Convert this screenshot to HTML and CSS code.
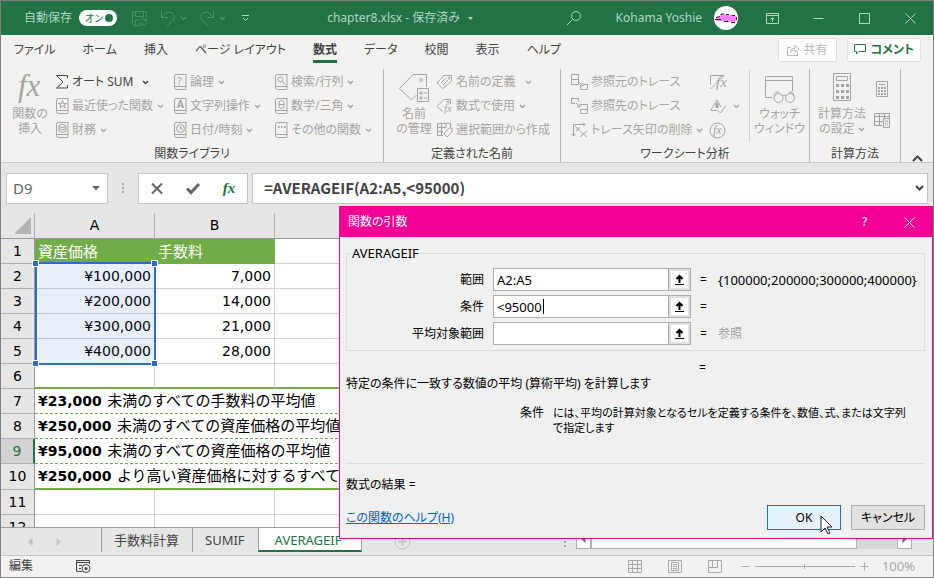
FILE: index.html
```html
<!DOCTYPE html>
<html lang="ja">
<head>
    <meta charset="UTF-8">
    <meta name="viewport" content="width=device-width, initial-scale=1.0">
    <title>chapter8.xlsx</title>
    <link rel="stylesheet" href="styles.css">
</head>
<body>
    <svg class="sprite" aria-hidden="true">
        <symbol id="chev" viewBox="0 0 7 5"><path d="M1 1l2.500 2.500L6 1"/></symbol>
        <symbol id="book" viewBox="0 0 14 18"><path d="M13.500 1.500H3.500Q1.500 1.500 1.500 3.500V14.500Q1.500 16.500 3.500 16.500H13V1.500M1.500 13.500H13" /></symbol>
        <symbol id="arrow-up" viewBox="0 0 11 12"><path d="M5.500 9V2M2.500 5l3-3 3 3"/><path d="M1 10.500h9" stroke-width="1"/></symbol>
    </svg>

    <div class="janela">
        <!-- title bar -->
        <header class="titulo">
            <div class="acesso">
                <label for="autosave">自動保存</label>
                <span class="toggle"><input type="checkbox" id="autosave" checked><span>オン</span></span>
                <button class="salvar" aria-label="保存"><svg width="17" height="17" viewBox="0 0 17 17"><path d="M7 15.500H3L1.500 14V1.500h14V7M4.500 1.500v5h8v-5M4.500 15v-5H8M9 10.500q3-4 6 0M15.500 7.500v3h-3M15.500 12.500q-3 5-6 1M8.500 16.500v-3h3"/></svg></button>
                <button class="undo" aria-label="元に戻す"><svg width="16" height="17" viewBox="0 0 16 17"><path d="M1.500 1v6.500H8M1.500 7.500L6 3q3-2 6 0 4 3 1 7l-6 6"/></svg><svg class="chev"><use href="#chev"/></svg></button>
                <button class="undo" aria-label="やり直し"><svg width="16" height="17" viewBox="0 0 16 17"><path d="M14.500 1v6.500H8M14.500 7.500L10 3Q7 1 4 3 0 6 3 10l6 6"/></svg><svg class="chev"><use href="#chev"/></svg></button>
                <button class="mais" aria-label="カスタマイズ"><svg width="9" height="8" viewBox="0 0 9 8"><path d="M1 1.500h7M2 4l2.500 2.500L7 4"/></svg></button>
            </div>
            <div class="arquivo">chapter8.xlsx - 保存済み <svg width="7" height="4" viewBox="0 0 7 4"><path class="cheio" d="M1 0h5L3.500 3z"/></svg></div>
            <button class="busca" aria-label="検索"><svg width="16" height="16" viewBox="0 0 16 16"><circle cx="10" cy="6" r="4.500"/><path d="M6.500 9.500L1 15"/></svg></button>
            <span class="usuario">Kohama Yoshie</span>
            <svg class="avatar" width="24" height="24" viewBox="0 0 24 24"><circle cx="12" cy="12" r="12" fill="#fff" stroke="none"/><path d="M2 12l5-2V8l2 1 2-1 1 1h7l3 1 1 4-2 2h-8l-3-1H2z" fill="#ff80ff" stroke="none"/><path d="M1 13.500h6M2 11.500l4-1M7 9.500V8h3M12 8.500h3M18 9.500h3M10 15.500h4M17 16.500h4M22.500 11v3" stroke="#222"/></svg>
            <div class="controles">
                <button aria-label="リボンの表示オプション"><svg width="13" height="11" viewBox="0 0 13 11"><path d="M.5.500h12v10H.500zM.5 2.500h12M6.500 9V4.500M4.500 6.500l2-2 2 2"/></svg></button>
                <button aria-label="最小化"><svg width="11" height="11" viewBox="0 0 11 11"><path d="M.5 5.500h10"/></svg></button>
                <button aria-label="最大化"><svg width="11" height="11" viewBox="0 0 11 11"><path d="M.5.500h10v10H.500z"/></svg></button>
                <button aria-label="閉じる"><svg width="11" height="11" viewBox="0 0 11 11"><path d="M.5.500l10 10M10.500.500l-10 10"/></svg></button>
            </div>
        </header>

        <!-- ribbon tabs -->
        <nav class="abas">
            <a href="#">ファイル</a>
            <a href="#">ホーム</a>
            <a href="#">挿入</a>
            <a href="#">ページ レイアウト</a>
            <a href="#" class="ativa">数式</a>
            <a href="#">データ</a>
            <a href="#">校閲</a>
            <a href="#">表示</a>
            <a href="#">ヘルプ</a>
            <div class="direita">
                <button class="caixa" disabled><svg width="13" height="12" viewBox="0 0 13 12"><path d="M4 3.500H.500v8h10V8M3 8q1-4 5-4V1l4 4-4 3.500V6Q5 6 3 8z"/></svg>共有</button>
                <button class="caixa verde"><svg width="13" height="12" viewBox="0 0 13 12"><path d="M.5.500h11v7H5L2.500 10V7.500H.500z"/></svg>コメント</button>
            </div>
        </nav>

        <!-- ribbon -->
        <section class="ribbon">
            <div class="grupo">
                <div class="itens biblioteca">
                    <button class="grande" disabled><svg width="32" height="32"><text class="fx" x="4" y="24" font-size="31">fx</text></svg><span>関数の<br>挿入</span></button>
                    <div class="coluna">
                        <button class="escuro"><svg width="14" height="18" viewBox="0 0 14 18"><path d="M12.500 5V2.500H1.500L8 9l-6.500 6h11V12"/></svg>オート SUM<svg class="chev longe"><use href="#chev"/></svg></button>
                        <button disabled><svg width="14" height="18"><use href="#book"/><path d="M7.500 3.500l1 3h3L9 8l1 3-2.500-2L5 11l1-3-2.500-1.500h3z"/></svg>最近使った関数<svg class="chev"><use href="#chev"/></svg></button>
                        <button disabled><svg width="14" height="18"><use href="#book"/><ellipse cx="7.500" cy="5" rx="3.500" ry="1.500"/><path d="M4 5v5q3.500 3 7 0V5M4 7.500q3.500 3 7 0"/></svg>財務<svg class="chev"><use href="#chev"/></svg></button>
                    </div>
                    <div class="coluna">
                        <button disabled><svg width="14" height="18"><use href="#book"/><text x="4" y="12" font-size="11">?</text></svg>論理<svg class="chev"><use href="#chev"/></svg></button>
                        <button disabled><svg width="14" height="18"><use href="#book"/><text x="4" y="11" font-size="10" font-weight="bold">A</text></svg>文字列操作<svg class="chev"><use href="#chev"/></svg></button>
                        <button disabled><svg width="14" height="18"><use href="#book"/><circle cx="7.500" cy="7.500" r="4"/><path d="M7.500 5v3H10"/></svg>日付/時刻<svg class="chev"><use href="#chev"/></svg></button>
                    </div>
                    <div class="coluna">
                        <button disabled><svg width="14" height="18"><use href="#book"/><circle cx="6.500" cy="6.500" r="2.500"/><path d="M8.500 8.500L11.500 12"/></svg>検索/行列<svg class="chev"><use href="#chev"/></svg></button>
                        <button disabled><svg width="14" height="18"><use href="#book"/><rect x="5" y="3.500" width="5" height="8" rx="2.500"/><path d="M5 7.500h5"/></svg>数学/三角<svg class="chev"><use href="#chev"/></svg></button>
                        <button disabled><svg width="14" height="18"><use href="#book"/><path d="M4 6h1.500M7 6h1.500M10 6h1.500" stroke-width="2"/></svg>その他の関数<svg class="chev"><use href="#chev"/></svg></button>
                    </div>
                </div>
                <div class="nome">関数ライブラリ</div>
            </div>

            <div class="grupo">
                <div class="itens nomes">
                    <button class="grande" disabled><svg width="32" height="32" viewBox="0 0 32 32"><path class="papel" d="M28.500 15V2.500H15L1.500 16.500l12 11.500 5-5"/><circle cx="23" cy="8" r="1.500"/><path class="papel" d="M19.500 16.500h11v13h-11zM22 20h2v2h-2zM22 25h2v2h-2zM26 21h3M26 26h3"/></svg><span>名前<br>の管理</span></button>
                    <div class="coluna">
                        <button disabled><svg width="17" height="16" viewBox="0 0 17 16"><path d="M15.500 1.500H8L1 9l5.500 5.500 9-7zM5 9l5-5M7 11l5-5"/><circle cx="13" cy="4" r="1"/></svg>名前の定義<svg class="chev longe"><use href="#chev"/></svg></button>
                        <button disabled><svg width="17" height="16" viewBox="0 0 17 16"><path d="M14.500 6V1.500H8L1 8.500l5.500 5"/><circle cx="12" cy="4" r="1"/><text class="fx" x="8" y="14" font-size="11">fx</text></svg>数式で使用<svg class="chev"><use href="#chev"/></svg></button>
                        <button disabled><svg width="17" height="16" viewBox="0 0 17 16"><path d="M7 13.500H1.500V1.500h13V5M1.500 5.500H10M1.500 9.500H7M5.500 1.500v12M10 1.500v4"/><path class="papel" d="M16 6v4l-5 5-3-3 5-6z"/></svg>選択範囲から作成</button>
                    </div>
                </div>
                <div class="nome">定義された名前</div>
            </div>

            <div class="grupo">
                <div class="itens analise">
                    <div class="coluna">
                        <button disabled><svg width="17" height="17" viewBox="0 0 17 17"><path d="M.5.500h7v10h-7zM.5 5.500h7M8 8l4 4M12 9v3H9M13 10.500h3.500v5h-7V13"/></svg>参照元のトレース</button>
                        <button disabled><svg width="17" height="17" viewBox="0 0 17 17"><path d="M4 5.500H.500v-5h7V3M5 5l4 4M9 6v3H6M9.500 6.500h7v9h-7v-4M9.500 11.500h7"/></svg>参照先のトレース</button>
                        <button disabled><svg width="17" height="17" viewBox="0 0 17 17"><path d="M2.500 14V2.500H14M12 .5l2 2-2 2M.5 12l2 2 2-2M4 4l4 4M9 9l7 6M16 9l-7 6M8 5v3H5"/></svg>トレース矢印の削除<svg class="chev"><use href="#chev"/></svg></button>
                    </div>
                    <div class="coluna">
                        <button disabled aria-label="数式の表示"><svg width="17" height="17" viewBox="0 0 17 17"><path d="M1.500 11V1.500H15L1.500 15"/><text class="fx" x="7" y="13" font-size="15">fx</text></svg></button>
                        <button disabled aria-label="エラー チェック"><svg width="17" height="17" viewBox="0 0 17 17"><path d="M8 2L1.500 12.500H8M8 2l4 7M8.500 12l3 3 5-7"/><path d="M8 5v5" stroke-width="3"/></svg><svg class="chev"><use href="#chev"/></svg></button>
                        <button disabled aria-label="数式の検証"><svg width="17" height="17" viewBox="0 0 17 17"><circle cx="8.500" cy="8.500" r="7.500"/><text class="fx" x="4" y="12" font-size="12">fx</text></svg></button>
                    </div>
                    <button class="grande janelinha" disabled><svg width="32" height="32" viewBox="0 0 32 32"><path class="papel" d="M8 25.500H1.500V4.500h27V19M1.500 8.500h27"/><path d="M10 24q1-5 5-4M30 24q-1-5-5-4M19 24q2-2 3 0"/><circle class="papel" cx="14.500" cy="26" r="4.500"/><circle class="papel" cx="26" cy="26" r="4.500"/></svg><span>ウォッチ<br>ウィンドウ</span></button>
                </div>
                <div class="nome">ワークシート分析</div>
            </div>

            <div class="grupo">
                <div class="itens calculo">
                    <button class="grande" disabled><svg width="20" height="32" viewBox="0 0 20 32"><path d="M1.500 1.500h17v27h-17zM4.500 4.500h11v4h-11z"/><path d="M4 13.500h13M4 19.500h13M4 25.500h13" stroke-width="3" stroke-dasharray="3 2"/></svg><span>計算方法<br>の設定 <svg class="chev"><use href="#chev"/></svg></span></button>
                    <div class="pequenos">
                        <button disabled aria-label="再計算実行"><svg width="14" height="18" viewBox="0 0 14 18"><path d="M1.500 1.500h11v15h-11zM4 4.500h6"/><path d="M3 8h8M3 11h8M3 14h8" stroke-width="2" stroke-dasharray="2 1"/></svg></button>
                        <button disabled aria-label="シート再計算"><svg width="17" height="17" viewBox="0 0 17 17"><path d="M8 13.500H.500V1.500h15V7M.5 4.500h15M.5 9.500H9M5.500 1.500v12M10.500 1.500V7"/><path class="papel" d="M9.500 6.500h6v9h-6zM11 9h3M11 11h1M13 11h1M11 13h1M13 13h1"/></svg></button>
                    </div>
                </div>
                <div class="nome">計算方法</div>
            </div>
            <button class="recolher" aria-label="リボンを折りたたむ"><svg width="11" height="7" viewBox="0 0 11 7"><path d="M1 6l4.500-4.500L10 6" stroke-width="2"/></svg></button>
        </section>

        <!-- formula bar -->
        <section class="barra-formula">
            <div class="caixa-nome"><input type="text" value="D9" aria-label="名前ボックス"><svg width="9" height="5" viewBox="0 0 9 5"><path class="cheio" d="M0 0h8L4 4.500z"/></svg></div>
            <span class="pontos"></span>
            <div class="caixa-botoes">
                <button aria-label="キャンセル"><svg width="12" height="11" viewBox="0 0 12 11"><path d="M1 .5l10 10M11 .5L1 10.500" stroke-width="2"/></svg></button>
                <button aria-label="入力"><svg width="14" height="11" viewBox="0 0 14 11"><path d="M1 5.500L5 9.500 13 1" stroke-width="3"/></svg></button>
                <button class="fx verde" aria-label="関数の挿入">fx</button>
            </div>
            <div class="caixa-formula"><input type="text" value="=AVERAGEIF(A2:A5,&lt;95000)" aria-label="数式バー"><svg width="9" height="7" viewBox="0 0 9 7"><path d="M1 1l3.500 3.500L8 1" stroke-width="2"/></svg></div>
        </section>

        <!-- sheet -->
        <main class="planilha">
            <table>
                <colgroup><col class="col-num"><col class="col-dado"><col class="col-dado"><col></colgroup>
                <thead>
                    <tr><th class="canto"><svg width="17" height="17" viewBox="0 0 17 17"><path d="M17 0v17H0z"/></svg></th><th>A</th><th>B</th><th></th></tr>
                </thead>
                <tbody>
                    <tr class="cabeca"><th>1</th><td>資産価格</td><td>手数料</td><td></td></tr>
                    <tr><th>2</th><td class="num sel">¥100,000<span class="selecao"><i></i><i></i><i></i><i></i></span></td><td class="num">7,000</td><td></td></tr>
                    <tr><th>3</th><td class="num">¥200,000</td><td class="num">14,000</td><td></td></tr>
                    <tr><th>4</th><td class="num">¥300,000</td><td class="num">21,000</td><td></td></tr>
                    <tr><th>5</th><td class="num">¥400,000</td><td class="num">28,000</td><td></td></tr>
                    <tr class="linha-verde"><th>6</th><td></td><td></td><td></td></tr>
                    <tr class="nota"><th>7</th><td colspan="3"><b>¥23,000</b> 未満のすべての手数料の平均値</td></tr>
                    <tr class="nota"><th>8</th><td colspan="3"><b>¥250,000</b> 未満のすべての資産価格の平均値</td></tr>
                    <tr class="nota atual"><th>9</th><td colspan="3"><b>¥95,000</b> 未満のすべての資産価格の平均値</td></tr>
                    <tr class="nota linha-verde"><th>10</th><td colspan="3"><b>¥250,000</b> より高い資産価格に対するすべて</td></tr>
                    <tr><th>11</th><td></td><td></td><td></td></tr>
                    <tr><th>12</th><td></td><td></td><td></td></tr>
                </tbody>
            </table>
        </main>

        <!-- sheet tabs -->
        <footer class="folhas">
            <div class="setas">
                <button aria-label="前のシート"><svg width="5" height="8" viewBox="0 0 5 8"><path class="cheio" d="M4.500 0v8L0 4z"/></svg></button>
                <button aria-label="次のシート"><svg width="5" height="8" viewBox="0 0 5 8"><path class="cheio" d="M.5 0v8L5 4z"/></svg></button>
            </div>
            <a href="#">手数料計算</a>
            <a href="#">SUMIF</a>
            <a href="#" class="ativa">AVERAGEIF</a>
            <button class="nova" aria-label="新しいシート"><svg width="17" height="17" viewBox="0 0 17 17"><circle cx="8.500" cy="8.500" r="7.500"/><path d="M8.500 4.500v8M4.500 8.500h8" stroke-width="2"/></svg></button>
            <span class="pontos"></span>
            <div class="rolagem">
                <button aria-label="左へ"><svg width="5" height="8" viewBox="0 0 5 8"><path class="cheio" d="M4.500 0v8L0 4z"/></svg></button>
                <span class="polegar"></span>
                <button aria-label="右へ"><svg width="5" height="8" viewBox="0 0 5 8"><path class="cheio" d="M.5 0v8L5 4z"/></svg></button>
            </div>
        </footer>

        <div class="status">
            <span>編集</span>
            <svg class="macro" width="15" height="13" viewBox="0 0 15 13"><path d="M6 11.500H.500v-11h13V4M.5 2.500h13M3 5.500h3M3 8.500h2"/><circle cx="10" cy="8.500" r="4"/><circle class="cheio" cx="10" cy="8.500" r="1.500"/></svg>
            <div class="visoes">
                <button aria-label="標準"><svg width="14" height="13" viewBox="0 0 14 13"><path d="M.5.500h13v12H.500zM.5 4.500h13M.5 8.500h13M4.500.500v12M9.500.500v12"/></svg></button>
                <button aria-label="ページ レイアウト"><svg width="14" height="13" viewBox="0 0 14 13"><path d="M.5.500h13v12H.500zM3.500 2.500h7v8h-7zM5 4.500h4M5 6.500h4M5 8.500h4"/></svg></button>
                <button aria-label="改ページ プレビュー"><svg width="14" height="13" viewBox="0 0 14 13"><path d="M.5.500h13v12H.500zM4.500.500v7h5v-7M.5 7.500h4"/></svg></button>
            </div>
            <div class="zoom">
                <button aria-label="縮小"><svg width="9" height="9" viewBox="0 0 9 9"><path d="M.5 4.500h8"/></svg></button>
                <input type="range" min="0" max="100" value="50" aria-label="ズーム">
                <button aria-label="拡大"><svg width="9" height="9" viewBox="0 0 9 9"><path d="M.5 4.500h8M4.500.500v8"/></svg></button>
                <span>100%</span>
            </div>
        </div>

        <!-- function arguments dialog -->
        <div class="dialogo" role="dialog" aria-label="関数の引数">
            <div class="dialogo-titulo">
                <span>関数の引数</span>
                <button aria-label="ヘルプ">?</button>
                <button aria-label="閉じる"><svg width="11" height="11" viewBox="0 0 11 11"><path d="M.5.500l10 10M10.500.500l-10 10"/></svg></button>
            </div>
            <div class="dialogo-corpo">
                <fieldset>
                    <legend>AVERAGEIF</legend>
                    <div class="argumento">
                        <label for="faixa">範囲</label>
                        <div class="campo"><input type="text" id="faixa" value="A2:A5"><button aria-label="範囲を選択"><svg width="11" height="12"><use href="#arrow-up"/></svg></button></div>
                        <span>=</span><span class="valor">{100000;200000;300000;400000}</span>
                    </div>
                    <div class="argumento">
                        <label for="criterio">条件</label>
                        <div class="campo"><input type="text" id="criterio" value="&lt;95000"><span class="caret"></span><button aria-label="条件を選択"><svg width="11" height="12"><use href="#arrow-up"/></svg></button></div>
                        <span>=</span><span></span>
                    </div>
                    <div class="argumento">
                        <label for="media">平均対象範囲</label>
                        <div class="campo"><input type="text" id="media"><button aria-label="平均対象範囲を選択"><svg width="11" height="12"><use href="#arrow-up"/></svg></button></div>
                        <span>=</span><span class="cinza">参照</span>
                    </div>
                </fieldset>
                <div class="argumento resultado"><span></span><span></span><span>=</span><span></span></div>
                <p class="descricao">特定の条件に一致する数値の平均 (算術平均) を計算します</p>
                <div class="ajuda-arg"><span>条件</span><span class="texto">には、平均の計算対象となるセルを定義する条件を、数値、式、または文字列<br>で指定します</span></div>
                <p class="final">数式の結果 =</p>
                <div class="rodape">
                    <a href="#">この関数のヘルプ(H)</a>
                    <button class="ok">OK<svg class="cursor" width="13" height="20" viewBox="0 0 13 20"><path d="M1 1v16l4-4 3 6 2-1-3-6h5z"/></svg></button>
                    <button>キャンセル</button>
                </div>
            </div>
        </div>
    </div>
</body>
</html>
```
FILE: styles.css
```css
*
{
    box-sizing: border-box;
}
body
{
    margin: 0;
    font-family: "Noto Sans", "Noto Sans CJK JP", sans-serif;
    font-size: 12px;
    line-height: 16px;
    font-feature-settings: "palt";
    color: #444;
    white-space: nowrap;
}
button, input
{
    font: inherit;
    font-feature-settings: inherit;
    color: inherit;
    border: none;
    background: none;
    padding: 0;
    margin: 0;
    min-width: 0;
}
a
{
    color: inherit;
    text-decoration: none;
}
button
{
    display: flex;
    align-items: center;
    justify-content: center;
}
svg
{
    fill: none;
    stroke: currentColor;
    flex: none;
    overflow: visible;
}
svg text
{
    fill: currentColor;
    stroke: none;
}
.sprite
{
    position: absolute;
    width: 0;
    height: 0;
}
.cheio
{
    fill: currentColor;
    stroke: none;
}
.papel
{
    fill: #f3f2f1;
}
.chev
{
    width: 7px;
    height: 5px;
    margin-left: 4px;
    stroke-width: 1.500;
}
.chev.longe
{
    margin-left: 9px;
}
.fx
{
    font-family: "Liberation Serif", serif;
    font-style: italic;
}
.verde
{
    color: #217346;
}
.janela
{
    position: relative;
    display: flex;
    flex-direction: column;
    height: 100vh;
    border: 1px solid #808080;
    background-color: #e6e6e6;
    overflow: hidden;
}

/* title bar */
.titulo
{
    display: flex;
    align-items: center;
    flex: none;
    height: 34px;
    background-color: #217346;
    color: #b4d4c1;
}
.acesso
{
    display: flex;
    align-items: center;
    flex: 0 0 35%;
    padding-left: 23px;
}
.toggle
{
    position: relative;
    width: 38px;
    height: 16px;
    margin-left: 7px;
    border-radius: 8px;
    background-color: white;
    color: #217346;
    font-size: 10px;
}
.toggle span
{
    padding-left: 6px;
}
.toggle input
{
    appearance: none;
    position: absolute;
    right: 4px;
    top: 4px;
    width: 8px;
    height: 8px;
    border-radius: 4px;
    background-color: #217346;
}
.salvar, .undo
{
    color: #4f9069;
}
.salvar
{
    margin-left: 14px;
}
.undo
{
    margin-left: 12px;
}
.mais
{
    margin-left: 15px;
}
.arquivo svg
{
    margin-left: 4px;
    vertical-align: middle;
}
.busca
{
    margin-left: auto;
}
.usuario
{
    margin-left: 34px;
}
.avatar
{
    margin-left: 12px;
}
.controles
{
    display: flex;
    margin-left: 11px;
}
.controles button
{
    width: 46px;
    height: 34px;
}

/* ribbon tabs */
.abas
{
    display: flex;
    align-items: center;
    flex: none;
    gap: 27px;
    height: 29px;
    padding: 0 12px 0 13px;
    background-color: #f3f2f1;
}
.abas a
{
    height: 26px;
    line-height: 26px;
}
.abas .ativa
{
    font-weight: bold;
    border-bottom: 3px solid #217346;
}
.direita
{
    display: flex;
    gap: 10px;
    margin-left: auto;
}
.caixa
{
    gap: 4px;
    height: 24px;
    padding: 0 6px;
    border: 1px solid #e1dfdd;
    border-radius: 2px;
    background-color: white;
    font-weight: bold;
}
.caixa:disabled
{
    color: #b8b8b8;
    padding: 0 8px;
    font-weight: normal;
}

/* ribbon */
.ribbon
{
    display: grid;
    grid-template-columns: 383fr 177fr 249fr 91fr 32fr;
    flex: none;
    height: 99px;
    padding: 5px 0 4px;
    background-color: #f3f2f1;
    border-bottom: 1px solid #c8c8c8;
}
.ribbon button:disabled
{
    color: #a4a4a4;
}
.grupo
{
    display: flex;
    flex-direction: column;
    padding-top: 1px;
    border-right: 1px solid #b8b8b8;
    min-width: 0;
}
.itens
{
    display: grid;
    height: 72px;
}
.biblioteca
{
    grid-template-columns: 50px 118px 101px 1fr;
    padding-left: 4px;
}
.nomes
{
    grid-template-columns: 44px 1fr;
    padding-left: 8px;
}
.analise
{
    grid-template-columns: 138px 40px 1fr;
    padding-left: 10px;
}
.calculo
{
    grid-template-columns: 58px 1fr;
    padding: 0 7px 0 3px;
}
.coluna
{
    display: grid;
    grid-template-rows: 24px 24px 24px;
    min-width: 0;
}
.coluna button
{
    justify-content: flex-start;
}
.coluna button > svg:first-child
{
    margin-right: 3px;
}
.nome
{
    margin-top: 4px;
    text-align: center;
}
.grande
{
    flex-direction: column;
    justify-content: flex-start;
    gap: 2px;
    padding-top: 2px;
    line-height: 15px;
}
.grande .chev
{
    margin-left: 0;
    vertical-align: middle;
}
.janelinha
{
    border-left: 1px solid #d0d0d0;
}
.pequenos
{
    display: flex;
    flex-direction: column;
    gap: 14px;
    padding-top: 10px;
}
.recolher
{
    align-self: end;
}

/* formula bar */
.barra-formula
{
    display: flex;
    align-items: center;
    flex: none;
    gap: 4px;
    height: 50px;
    padding: 0 5px;
    color: #666;
}
.caixa-nome, .caixa-botoes, .caixa-formula
{
    display: flex;
    align-items: center;
    height: 31px;
    border: 1px solid #c6c6c6;
    background-color: white;
}
.caixa-nome
{
    width: 102px;
    padding: 0 6px;
    font-size: 15px;
}
.caixa-nome input, .caixa-formula input
{
    flex: 1;
}
.pontos
{
    width: 2px;
    height: 10px;
    margin: 0 10px;
    background: repeating-linear-gradient(#a8a8a8 0 2px, transparent 2px 4px);
}
.caixa-botoes
{
    width: 110px;
}
.caixa-botoes button
{
    flex: 1;
}
.caixa-botoes .fx
{
    font-size: 15px;
    font-weight: bold;
}
.caixa-formula
{
    flex: 1;
    padding: 0 3px 0 11px;
    font-family: "Noto Sans CJK JP", sans-serif;
    font-size: 15px;
    font-feature-settings: normal;
    font-weight: bold;
    color: #444;
}

/* sheet */
.planilha
{
    flex: 1;
    min-height: 0;
    overflow: hidden;
}
table
{
    width: 100%;
    table-layout: fixed;
    border-collapse: separate;
    border-spacing: 0;
    font-family: "DejaVu Sans", "Noto Sans CJK JP", sans-serif;
    font-size: 14px;
    line-height: 20px;
    font-feature-settings: normal;
    color: black;
}
.col-num
{
    width: 34px;
}
.col-dado
{
    width: 120px;
}
th, td
{
    height: 25px;
    padding: 0 3px 1px;
    border-right: 1px solid #d0d0d0;
    border-bottom: 1px solid #d0d0d0;
}
td
{
    background-color: white;
    text-align: left;
    overflow: hidden;
}
th
{
    font-weight: normal;
    padding: 0 0 1px;
    border-color: #b0b0b0;
}
thead th, tbody th
{
    background-color: #e6e6e6;
}
thead th
{
    height: 26px;
    border-bottom-color: #999;
}
tbody th
{
    border-right-color: #999;
}
.canto svg
{
    display: block;
    margin-left: 13px;
    fill: #b4b4b4;
    stroke: none;
}
.cabeca td, .nota td
{
    font-family: "Noto Sans CJK JP", sans-serif;
    font-size: 15px;
}
.cabeca td:not(:last-child)
{
    background-color: #70ad47;
    border-color: #70ad47;
    color: white;
}
.num
{
    text-align: right;
}
.sel
{
    position: relative;
    overflow: visible;
}
.selecao
{
    position: absolute;
    left: 0;
    top: -2px;
    width: 121px;
    height: 103px;
    border: 2px solid #2f6bc9;
    background-color: rgba(47, 107, 201, 0.11);
}
.selecao i
{
    position: absolute;
    width: 7px;
    height: 7px;
    border: 1px solid white;
    background-color: #2f6bc9;
}
.selecao i:nth-child(1) { left: -5px; top: -4px; }
.selecao i:nth-child(2) { right: -4px; top: -4px; }
.selecao i:nth-child(3) { left: -5px; bottom: -4px; }
.selecao i:nth-child(4) { right: -4px; bottom: -4px; }
.nota td
{
    border-bottom: 1px dashed #70ad47;
}
.nota b
{
    margin-right: 2px;
    font-family: "DejaVu Sans", sans-serif;
    font-size: 14px;
}
.linha-verde td
{
    border-bottom: 2px solid #70ad47;
}
.nota.linha-verde > *
{
    height: 26px;
}
.atual th
{
    background-color: #d2d2d2;
    border-right: 2px solid #217346;
    color: #217346;
}

/* sheet tabs */
.folhas
{
    display: flex;
    flex: none;
    height: 28px;
    border-top: 1px solid #a0a0a0;
    font-size: 13px;
}
.setas
{
    display: flex;
    justify-content: center;
    gap: 23px;
    width: 100px;
    padding-right: 14px;
    color: #c0c0c0;
}
.folhas a
{
    height: 24px;
    padding: 0 13px 0 12px;
    border-left: 1px solid #a0a0a0;
    line-height: 25px;
    font-feature-settings: normal;
}
.folhas a.ativa
{
    border-bottom: 2px solid #217346;
    border-right: 1px solid #a0a0a0;
    padding: 0 20px 0 16px;
    background-color: white;
    color: #217346;
}
.nova
{
    align-self: flex-start;
    margin: 5px auto 0 32px;
    color: #c0c0c0;
}
.folhas .pontos
{
    align-self: center;
}
.rolagem
{
    display: flex;
    justify-content: space-between;
    width: 36%;
    height: 21px;
    margin-right: 21px;
    background-color: #d8d8d8;
}
.rolagem button
{
    width: 15px;
    border: 1px solid #b0b0b0;
    background-color: white;
    color: #666;
}
.polegar
{
    width: 266px;
    margin-right: auto;
    border: 1px solid #b0b0b0;
    background-color: white;
}

/* status bar */
.status
{
    display: flex;
    align-items: center;
    flex: none;
    height: 22px;
    padding: 0 18px 1px 8px;
    border-top: 1px solid #c6c6c6;
    background-color: #f3f2f1;
}
.macro
{
    margin-left: 43px;
}
.visoes
{
    display: flex;
    gap: 26px;
    margin-left: auto;
    color: #a8a8a8;
}
.zoom
{
    display: flex;
    align-items: center;
    gap: 5px;
    margin-left: 19px;
    color: #a8a8a8;
}
.zoom input
{
    appearance: none;
    width: 100px;
    height: 5px;
    background: linear-gradient(#a8a8a8, #a8a8a8) center / 100% 1px no-repeat;
}
.zoom input::-webkit-slider-thumb
{
    appearance: none;
    width: 1px;
    height: 5px;
    background-color: #a8a8a8;
}
.zoom span
{
    margin-left: 8px;
    font-size: 13px;
}

/* dialog */
.dialogo
{
    position: absolute;
    left: 338px;
    right: 0;
    top: 205px;
    border: 1px solid #f20094;
    background-color: #f0f0f0;
    color: black;
}
.dialogo-titulo
{
    display: flex;
    align-items: center;
    height: 30px;
    padding-left: 8px;
    background-color: #f20094;
    color: white;
}
.dialogo-titulo span
{
    margin-right: auto;
}
.dialogo-titulo button
{
    width: 45px;
    height: 30px;
}
.dialogo-corpo
{
    padding: 8px 7px 8px 6px;
}
fieldset
{
    display: grid;
    gap: 4px;
    min-width: 0;
    margin: 0;
    padding: 7px 0 5px;
    border: 1px solid #dcdcdc;
}
legend
{
    margin-left: 4px;
    padding: 0 1px;
    font-size: 13px;
}
.argumento
{
    display: grid;
    grid-template-columns: 137px 198px 9px 1fr;
    align-items: center;
    column-gap: 9px;
    height: 23px;
}
.argumento label
{
    text-align: right;
}
.campo
{
    position: relative;
    display: flex;
    height: 23px;
    border: 1px solid #adadad;
    background-color: white;
}
.campo input
{
    flex: 1;
    padding: 0 3px;
    font-size: 13px;
}
.valor
{
    font-size: 13px;
}
.campo button
{
    width: 21px;
    border: 2px solid #e1e1e1;
    outline: 1px solid #adadad;
}
.campo svg
{
    stroke-width: 2;
}
.caret
{
    position: absolute;
    left: 49px;
    top: 3px;
    width: 1px;
    height: 15px;
    background-color: black;
}
.cinza
{
    color: #a0a0a0;
}
.resultado
{
    align-items: end;
    height: 25px;
}
.descricao
{
    margin: 0;
}
.ajuda-arg
{
    display: grid;
    grid-template-columns: 24px 1fr;
    gap: 9px;
    height: 59px;
    margin-top: 13px;
    padding-left: 174px;
    border-bottom: 1px solid #dcdcdc;
    line-height: 15px;
}
.texto
{
    font-size: 11px;
}
.final
{
    margin: 13px 0 12px;
}
.rodape
{
    display: flex;
    align-items: center;
    gap: 10px;
}
.rodape a
{
    margin-right: auto;
    color: #0066cc;
    text-decoration: underline;
}
.rodape button
{
    position: relative;
    width: 74px;
    height: 25px;
    border: 1px solid #adadad;
    background-color: #e1e1e1;
}
.rodape .ok
{
    border-color: #0078d7;
    background-color: #e5f1fb;
}
.cursor
{
    position: absolute;
    left: 52px;
    top: 9px;
    fill: white;
    stroke: #223;
}
```
